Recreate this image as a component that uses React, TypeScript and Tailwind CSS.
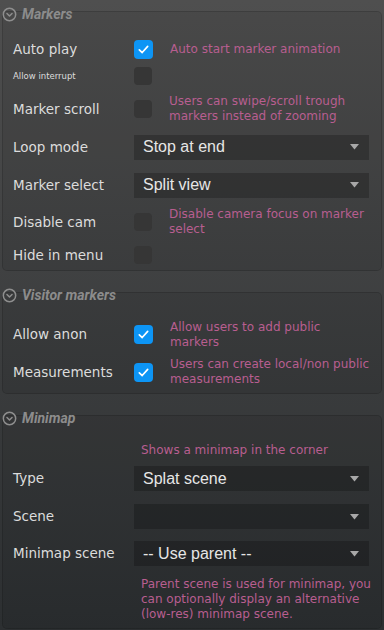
import React from 'react'

const label = "font-['DejaVu_Sans',sans-serif] text-[13.5px] text-[#dcdcdc]"
const desc = "font-['DejaVu_Sans',sans-serif] text-[12px] leading-[15px] text-[#b85e90]"

function SectionHeader({ title, first }: { title: string; first?: boolean }) {
  return (
    <div
      className={`relative z-10 flex h-[28px] items-center gap-[5px] pl-[2px] -mb-[17px] ${first ? '' : 'mt-[10px]'}`}
    >
      <svg width="15" height="15" viewBox="0 0 16 16" fill="none">
        <circle cx="8" cy="8" r="6.6" stroke="#8e8e8e" strokeWidth="1.6" />
        <path d="M5.3 7 L8 9.6 L10.7 7" stroke="#8e8e8e" strokeWidth="1.6" strokeLinecap="round" strokeLinejoin="round" />
      </svg>
      <span className="font-['Roboto',sans-serif] text-[14px] font-bold italic text-[#8c8c8c]">{title}</span>
    </div>
  )
}

function Panel({ children, className }: { children: React.ReactNode; className: string }) {
  return (
    <div className={`ml-[2px] mr-[2px] rounded-[5px] border border-black/15 bg-black/[0.07] ${className}`}>
      {children}
    </div>
  )
}

function Check({ on }: { on?: boolean }) {
  if (!on) return <div className="h-[18px] w-[18px] shrink-0 rounded-[4px] bg-[#363636]" />
  return (
    <div className="flex h-[19px] w-[19px] shrink-0 items-center justify-center rounded-[4px] bg-[#0d95f5]">
      <svg width="13" height="13" viewBox="0 0 14 14" fill="none">
        <path d="M2.5 7.3 L5.6 10.3 L11.5 3.6" stroke="white" strokeWidth="1.8" strokeLinecap="round" strokeLinejoin="round" />
      </svg>
    </div>
  )
}

function Select({ value }: { value: string }) {
  return (
    <div className="flex h-[25px] w-[235px] items-center justify-between bg-black/[0.22] pl-[9px] pr-[10px]">
      <span className="font-['Liberation_Sans',sans-serif] text-[16px] text-[#e6e6e6]">{value}</span>
      <svg width="9" height="6" viewBox="0 0 9 6">
        <path d="M0 0 H9 L4.5 5.5 Z" fill="#a8a8a8" />
      </svg>
    </div>
  )
}

function Row({
  name,
  h,
  small,
  children,
}: {
  name: string
  h: string
  small?: boolean
  children?: React.ReactNode
}) {
  return (
    <div className={`flex items-center ${h}`}>
      <div
        className={`w-[131px] shrink-0 pl-[10px] ${small ? "font-['DejaVu_Sans',sans-serif] text-[8.5px] font-medium text-[#dcdcdc]" : label}`}
      >
        {name}
      </div>
      {children}
    </div>
  )
}

function CheckRow({ name, h, on, text, small }: { name: string; h: string; on?: boolean; text?: string; small?: boolean }) {
  return (
    <Row name={name} h={h} small={small}>
      <Check on={on} />
      {text && <div className={`ml-[17px] w-[200px] ${desc}`}>{text}</div>}
    </Row>
  )
}

export default function App() {
  return (
    <div className="h-[630px] w-[384px] overflow-hidden bg-gradient-to-b from-[#4f4f4f] to-[#2c2f31]">
      <SectionHeader title="Markers" first />
      <Panel className="pt-[25px] pb-[1px]">
        <CheckRow name="Auto play" h="h-[24px]" on text="Auto start marker animation" />
        <CheckRow name="Allow interrupt" h="h-[30px]" small />
        <CheckRow name="Marker scroll" h="h-[36px]" text="Users can swipe/scroll trough markers instead of zooming" />
        <Row name="Loop mode" h="h-[40px]">
          <Select value="Stop at end" />
        </Row>
        <Row name="Marker select" h="h-[36px]">
          <Select value="Split view" />
        </Row>
        <CheckRow name="Disable cam" h="h-[38px]" text="Disable camera focus on marker select" />
        <CheckRow name="Hide in menu" h="h-[28px]" />
      </Panel>

      <SectionHeader title="Visitor markers" />
      <Panel className="pt-[23px] pb-[2px]">
        <CheckRow name="Allow anon" h="h-[37px]" on text="Allow users to add public markers" />
        <CheckRow name="Measurements" h="h-[38px]" on text="Users can create local/non public measurements" />
      </Panel>

      <SectionHeader title="Minimap" />
      <Panel className="pt-[25px] pb-[6px]">
        <div className={`flex h-[18px] items-center pl-[138px] ${desc}`}>Shows a minimap in the corner</div>
        <Row name="Type" h="h-[39px]">
          <Select value="Splat scene" />
        </Row>
        <Row name="Scene" h="h-[37px]">
          <Select value="" />
        </Row>
        <Row name="Minimap scene" h="h-[37px]">
          <Select value="-- Use parent --" />
        </Row>
        <div className={`mt-[5px] pl-[138px] pr-[10px] ${desc}`}>
          Parent scene is used for minimap, you can optionally display an alternative (low-res) minimap scene.
        </div>
      </Panel>
    </div>
  )
}
